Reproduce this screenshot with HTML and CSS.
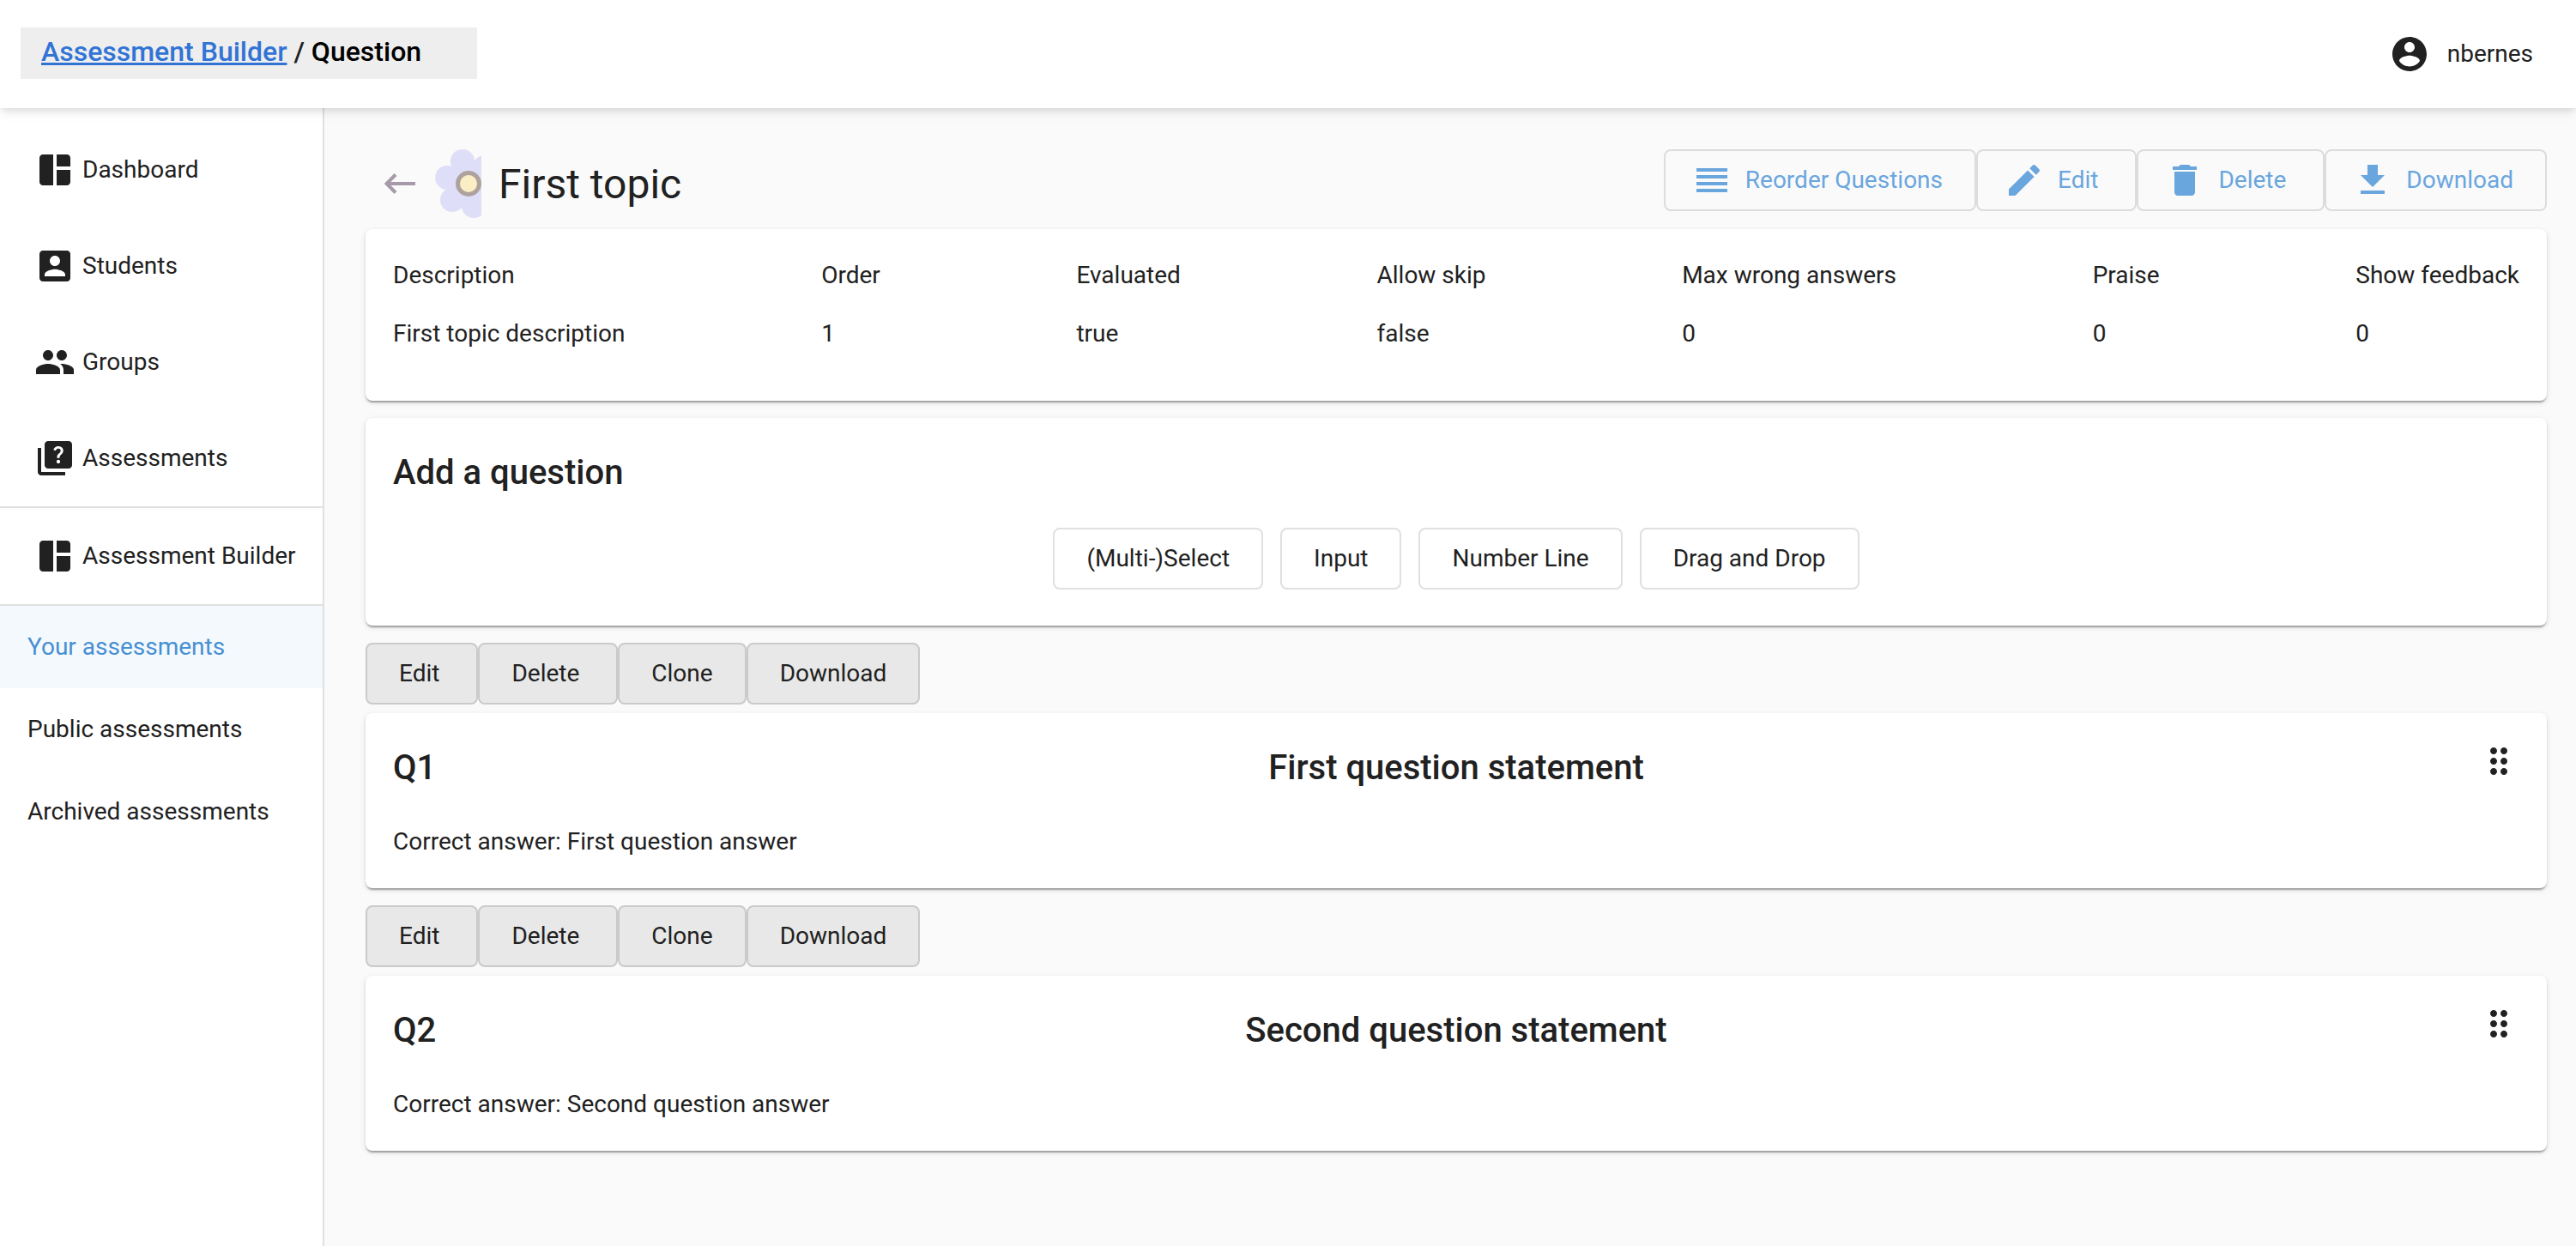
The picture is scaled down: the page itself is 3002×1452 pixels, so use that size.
FILE: index.html
```html
<!DOCTYPE html>
<html lang="en">
<head>
  <meta charset="utf-8">
  <meta name="viewport" content="width=device-width, initial-scale=1">
  <title>Assessment Builder</title>
  <link rel="stylesheet" href="styles.css">
</head>
<body>
  <svg class="sprite" aria-hidden="true">
    <symbol id="i-dashboard" viewBox="0 0 24 24"><path d="M11 21H5c-1.1 0-2-.9-2-2V5c0-1.1.9-2 2-2h6v18zm2 0h6c1.1 0 2-.9 2-2v-7h-8v9zm8-11V5c0-1.1-.9-2-2-2h-6v7h8z"/></symbol>
    <symbol id="i-account-box" viewBox="0 0 24 24"><path d="M3 5v14c0 1.1.89 2 2 2h14c1.1 0 2-.9 2-2V5c0-1.1-.9-2-2-2H5c-1.11 0-2 .9-2 2zm12 4c0 1.66-1.34 3-3 3s-3-1.34-3-3 1.34-3 3-3 3 1.34 3 3zm-9 8c0-2 4-3.1 6-3.1s6 1.1 6 3.1v1H6v-1z"/></symbol>
    <symbol id="i-people" viewBox="0 0 24 24"><path d="M16 11c1.66 0 2.99-1.34 2.99-3S17.66 5 16 5c-1.66 0-3 1.34-3 3s1.34 3 3 3zm-8 0c1.66 0 2.99-1.34 2.99-3S9.66 5 8 5C6.34 5 5 6.34 5 8s1.34 3 3 3zm0 2c-2.33 0-7 1.17-7 3.5V19h14v-2.5c0-2.33-4.67-3.5-7-3.5zm8 0c-.29 0-.62.02-.97.05 1.16.84 1.97 1.97 1.97 3.45V19h6v-2.5c0-2.33-4.67-3.5-7-3.5z"/></symbol>
    <symbol id="i-quiz" viewBox="0 0 24 24"><path d="M4 6H2v14c0 1.1.9 2 2 2h14v-2H4V6z"/><path d="M20 2H8c-1.1 0-2 .9-2 2v12c0 1.1.9 2 2 2h12c1.1 0 2-.9 2-2V4c0-1.1-.9-2-2-2zm-5.99 13c-.59 0-1.05-.47-1.05-1.05 0-.59.47-1.04 1.05-1.04.59 0 1.04.45 1.04 1.04-.01.58-.45 1.05-1.04 1.05zm2.5-6.17c-.63.93-1.23 1.21-1.56 1.81-.13.24-.18.4-.18 1.18h-1.52c0-.41-.06-1.08.26-1.65.41-.73 1.18-1.16 1.63-1.8.48-.68.21-1.94-1.14-1.94-.88 0-1.32.67-1.5 1.23l-1.37-.57C11.51 5.96 12.52 5 13.99 5c1.23 0 2.08.56 2.51 1.26.37.61.58 1.73.01 2.57z"/></symbol>
    <symbol id="i-account-circle" viewBox="0 0 24 24"><path d="M12 2C6.48 2 2 6.48 2 12s4.48 10 10 10 10-4.48 10-10S17.52 2 12 2zm0 3c1.66 0 3 1.34 3 3s-1.34 3-3 3-3-1.34-3-3 1.34-3 3-3zm0 14.2c-2.5 0-4.71-1.28-6-3.22.03-1.99 4-3.08 6-3.08 1.99 0 5.97 1.09 6 3.08-1.29 1.94-3.5 3.22-6 3.22z"/></symbol>
    <symbol id="i-reorder" viewBox="0 0 24 24"><path d="M3 15h18v-2H3v2zm0 4h18v-2H3v2zm0-8h18V9H3v2zm0-6v2h18V5H3z"/></symbol>
    <symbol id="i-edit" viewBox="0 0 24 24"><path d="M3 17.25V21h3.75L17.81 9.94l-3.75-3.75L3 17.25zM20.71 7.04c.39-.39.39-1.02 0-1.41l-2.34-2.34c-.39-.39-1.02-.39-1.41 0l-1.83 1.83 3.75 3.75 1.83-1.83z"/></symbol>
    <symbol id="i-delete" viewBox="0 0 24 24"><path d="M6 19c0 1.1.9 2 2 2h8c1.1 0 2-.9 2-2V7H6v12zM19 4h-3.5l-1-1h-5l-1 1H5v2h14V4z"/></symbol>
    <symbol id="i-download" viewBox="0 0 24 24"><path d="M19 9h-4V3H9v6H5l7 7 7-7zM5 18v2h14v-2H5z"/></symbol>
    <symbol id="i-drag" viewBox="0 0 24 24"><path d="M11 18c0 1.1-.9 2-2 2s-2-.9-2-2 .9-2 2-2 2 .9 2 2zm-2-8c-1.1 0-2 .9-2 2s.9 2 2 2 2-.9 2-2-.9-2-2-2zm0-6c-1.1 0-2 .9-2 2s.9 2 2 2 2-.9 2-2-.9-2-2-2zm6 4c1.1 0 2-.9 2-2s-.9-2-2-2-2 .9-2 2 .9 2 2 2zm0 2c-1.1 0-2 .9-2 2s.9 2 2 2 2-.9 2-2-.9-2-2-2zm0 6c-1.1 0-2 .9-2 2s.9 2 2 2 2-.9 2-2-.9-2-2-2z"/></symbol>
  </svg>

  <header class="topbar">
    <nav class="breadcrumb" aria-label="Breadcrumb">
      <a class="breadcrumb-link" href="#">Assessment Builder</a> / <span class="breadcrumb-current">Question</span>
    </nav>
    <div class="user">
      <svg class="icon" aria-hidden="true"><use href="#i-account-circle"/></svg>
      <span>nbernes</span>
    </div>
  </header>

  <div class="shell">
    <nav class="sidebar" aria-label="Main">
      <a class="nav-item" href="#"><svg class="icon" aria-hidden="true"><use href="#i-dashboard"/></svg>Dashboard</a>
      <a class="nav-item" href="#"><svg class="icon" aria-hidden="true"><use href="#i-account-box"/></svg>Students</a>
      <a class="nav-item" href="#"><svg class="icon" aria-hidden="true"><use href="#i-people"/></svg>Groups</a>
      <a class="nav-item" href="#"><svg class="icon" aria-hidden="true"><use href="#i-quiz"/></svg>Assessments</a>
      <div class="nav-group">
        <a class="nav-item" href="#"><svg class="icon" aria-hidden="true"><use href="#i-dashboard"/></svg>Assessment Builder</a>
      </div>
      <a class="nav-subitem nav-subitem--active" href="#" aria-current="page">Your assessments</a>
      <a class="nav-subitem" href="#">Public assessments</a>
      <a class="nav-subitem" href="#">Archived assessments</a>
    </nav>

    <main class="content">
      <div class="page-head">
        <a class="back" href="#" aria-label="Back">
          <svg class="back-arrow" viewBox="0 0 36 24" aria-hidden="true"><path d="M36 12H3M13 1.500L2.500 12L13 22.500"/></svg>
        </a>
        <svg class="flower" viewBox="0 0 55 80" aria-hidden="true">
          <g class="flower-petals">
            <circle cx="33" cy="14" r="14"/>
            <circle cx="15" cy="33" r="14"/>
            <circle cx="21" cy="59" r="14"/>
            <circle cx="46" cy="66" r="14"/>
            <circle cx="59" cy="21" r="14"/>
            <circle cx="65" cy="47" r="14"/>
            <circle cx="40" cy="40" r="22"/>
          </g>
          <circle class="flower-core" cx="40" cy="40" r="12.500"/>
        </svg>
        <h1 class="page-title">First topic</h1>
        <div class="actions">
          <button class="btn btn--primary" type="button"><svg class="icon" aria-hidden="true"><use href="#i-reorder"/></svg>Reorder Questions</button>
          <button class="btn btn--primary btn--roomy" type="button"><svg class="icon" aria-hidden="true"><use href="#i-edit"/></svg>Edit</button>
          <button class="btn btn--primary btn--roomy" type="button"><svg class="icon" aria-hidden="true"><use href="#i-delete"/></svg>Delete</button>
          <button class="btn btn--primary" type="button"><svg class="icon" aria-hidden="true"><use href="#i-download"/></svg>Download</button>
        </div>
      </div>

      <section class="card">
        <dl class="facts">
          <div><dt>Description</dt><dd>First topic description</dd></div>
          <div><dt>Order</dt><dd>1</dd></div>
          <div><dt>Evaluated</dt><dd>true</dd></div>
          <div><dt>Allow skip</dt><dd>false</dd></div>
          <div><dt>Max wrong answers</dt><dd>0</dd></div>
          <div><dt>Praise</dt><dd>0</dd></div>
          <div><dt>Show feedback</dt><dd>0</dd></div>
        </dl>
      </section>

      <section class="card">
        <h2 class="card-title">Add a question</h2>
        <div class="question-types">
          <button class="btn" type="button">(Multi-)Select</button>
          <button class="btn" type="button">Input</button>
          <button class="btn" type="button">Number Line</button>
          <button class="btn" type="button">Drag and Drop</button>
        </div>
      </section>

      <div class="question-actions">
        <button class="btn btn--filled btn--roomy" type="button">Edit</button>
        <button class="btn btn--filled btn--roomy" type="button">Delete</button>
        <button class="btn btn--filled" type="button">Clone</button>
        <button class="btn btn--filled" type="button">Download</button>
      </div>
      <article class="card">
        <div class="question-head">
          <h2 class="card-title">Q1</h2>
          <h2 class="card-title">First question statement</h2>
          <svg class="icon" aria-hidden="true"><use href="#i-drag"/></svg>
        </div>
        <p class="answer">Correct answer: First question answer</p>
      </article>

      <div class="question-actions">
        <button class="btn btn--filled btn--roomy" type="button">Edit</button>
        <button class="btn btn--filled btn--roomy" type="button">Delete</button>
        <button class="btn btn--filled" type="button">Clone</button>
        <button class="btn btn--filled" type="button">Download</button>
      </div>
      <article class="card">
        <div class="question-head">
          <h2 class="card-title">Q2</h2>
          <h2 class="card-title">Second question statement</h2>
          <svg class="icon" aria-hidden="true"><use href="#i-drag"/></svg>
        </div>
        <p class="answer">Correct answer: Second question answer</p>
      </article>
    </main>
  </div>
</body>
</html>
```
FILE: styles.css
```css
* {
  box-sizing: border-box;
}

body {
  margin: 0;
  min-height: 100vh;
  display: flex;
  flex-direction: column;
  background: #fafafa;
  color: #212121;
  font: 400 28px/44px Roboto, "Liberation Sans", sans-serif;
}

h1, h2, p, dl, dd {
  margin: 0;
}

a {
  color: inherit;
  text-decoration: none;
}

.sprite {
  display: none;
}

.icon {
  width: 48px;
  height: 48px;
  flex: none;
  fill: currentColor;
}

/* Top bar */
.topbar {
  position: relative;
  z-index: 1;
  display: flex;
  justify-content: space-between;
  align-items: center;
  height: 126px;
  padding: 0 50px 0 24px;
  background: #fff;
  box-shadow: 0 4px 8px -2px rgba(0, 0, 0, .1), 0 4px 14px rgba(0, 0, 0, .08);
}

.breadcrumb {
  min-width: 532px;
  height: 60px;
  margin-bottom: 2px;
  padding: 0 24px;
  background: #eee;
  font-size: 32px;
  font-weight: 500;
  line-height: 56px;
}

.breadcrumb-link {
  color: #3174d6;
  text-decoration: underline;
}

.breadcrumb-current {
  color: #000;
}

.user {
  display: flex;
  align-items: center;
  gap: 20px;
}

/* Layout */
.shell {
  flex: 1;
  display: flex;
}

.sidebar {
  flex: none;
  width: 378px;
  padding-top: 16px;
  border-right: 2px solid #e0e0e0;
  background: #fff;
}

.nav-item,
.nav-subitem {
  display: flex;
  align-items: center;
}

.nav-item {
  gap: 8px;
  height: 112px;
  padding: 0 40px;
  white-space: nowrap;
}

.nav-group {
  border: solid #e0e0e0;
  border-width: 2px 0;
}

.nav-subitem {
  height: 96px;
  padding: 0 32px;
}

.nav-subitem--active {
  background: #f4f9fd;
  color: #468fd4;
}

.content {
  flex: 1;
  padding: 48px 34px 48px 48px;
}

/* Page heading */
.page-head {
  display: flex;
  align-items: flex-start;
  height: 80px;
  margin-bottom: 13px;
}

.back {
  display: flex;
  align-items: center;
  height: 80px;
  padding: 0 22px;
}

.back-arrow {
  width: 36px;
  height: 24px;
  fill: none;
  stroke: #a699aa;
  stroke-width: 4px;
}

.flower {
  width: 55px;
  height: 80px;
}

.flower-petals {
  fill: #dfdef8;
}

.flower-core {
  fill: #fbeec5;
  stroke: #aea29f;
  stroke-width: 5px;
}

.page-title {
  padding-left: 20px;
  font-size: 48px;
  font-weight: 400;
  line-height: 82px;
}

.actions {
  display: flex;
  margin-left: auto;
}

/* Buttons */
.btn {
  display: flex;
  align-items: center;
  height: 72px;
  padding: 0 37px;
  border: 2px solid #e0e0e0;
  border-radius: 8px;
  background: transparent;
  color: inherit;
  font: inherit;
  white-space: nowrap;
}

.btn--primary {
  gap: 15px;
  padding-left: 30px;
  border-color: #dcdcdc;
  color: #6aa6de;
}

.btn--filled {
  border-color: #cacaca;
  background: #e8e8e8;
}

.btn--roomy {
  padding-right: 43px;
}

/* Cards */
.card {
  margin-bottom: 20px;
  padding: 32px;
  border-radius: 8px;
  background: #fff;
  box-shadow: 0 4px 2px -2px rgba(0, 0, 0, .2), 0 2px 2px rgba(0, 0, 0, .14), 0 2px 6px rgba(0, 0, 0, .12);
}

.card-title {
  font-size: 40px;
  font-weight: 500;
  line-height: 64px;
}

.facts {
  display: flex;
  justify-content: space-between;
}

.facts dt,
.facts dd {
  margin-bottom: 24px;
}

.question-types {
  display: flex;
  justify-content: center;
  gap: 20px;
  margin-top: 32px;
  padding-bottom: 10px;
}

.question-actions {
  display: flex;
  margin-bottom: 10px;
}

.question-head {
  display: grid;
  grid-template-columns: 1fr auto 1fr;
  margin-bottom: 32px;
}

.question-head .icon {
  justify-self: end;
}
```
